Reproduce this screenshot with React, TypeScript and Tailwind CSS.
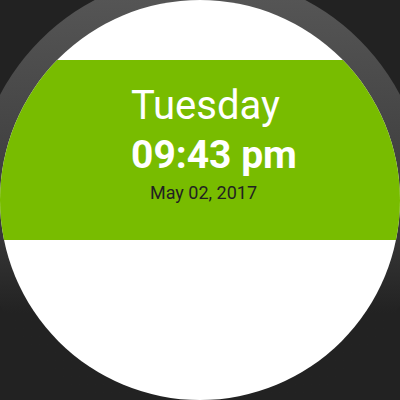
import React from "react";

export default function App() {
    return (
        <div className="w-[400px] h-[400px] bg-[#222222] overflow-hidden flex items-center justify-center">
            {/* BEZEL */}
            <div className="shrink-0 w-[452px] h-[452px] rounded-full bg-gradient-to-b from-[#585858] via-[#3a3a3a] via-55% to-[#222222] to-75% flex items-center justify-center">
                {/* FACE */}
                <div className="w-[400px] h-[400px] rounded-full bg-white overflow-hidden flex flex-col">
                    <div className="h-[60px] shrink-0" />
                    <div
                        className="h-[180px] shrink-0 bg-[#78bc00] flex flex-col pl-[131px] pt-[26px]"
                        style={{ fontFamily: "Roboto, 'Liberation Sans', sans-serif" }}
                    >
                        <div className="text-[40px] leading-none text-white">Tuesday</div>
                        <div className="text-[39px] leading-none font-bold text-white mt-[10px]">09:43 pm</div>
                        <div className="text-[18px] leading-none text-[#222222] mt-[9px] ml-[19px]">May 02, 2017</div>
                    </div>
                </div>
            </div>
        </div>
    );
}
